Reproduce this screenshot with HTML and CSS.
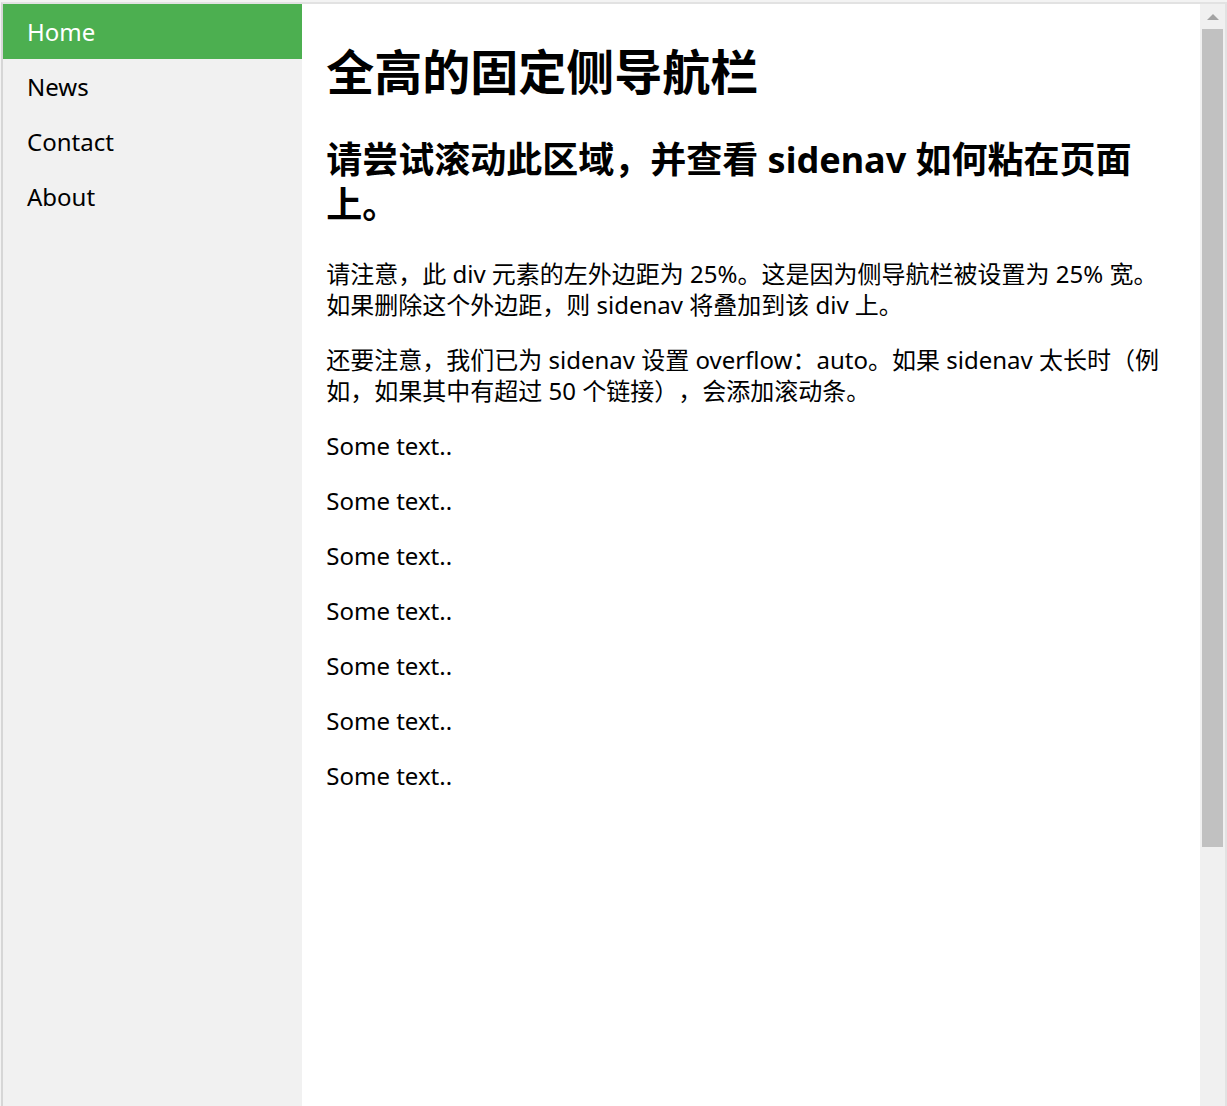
FILE: index.html
```html
<!DOCTYPE html>
<html lang="zh">
<head>
<meta charset="utf-8">
<title>全高的固定侧导航栏</title>
<link rel="stylesheet" href="styles.css">
</head>
<body>
<div class="frame">
  <div class="viewport">
    <ul class="sidenav">
      <li><a class="active" href="#home">Home</a></li>
      <li><a href="#news">News</a></li>
      <li><a href="#contact">Contact</a></li>
      <li><a href="#about">About</a></li>
    </ul>
    <div class="content">
      <h1>全高的固定侧导航栏</h1>
      <h2>请尝试滚动此区域，并查看 sidenav 如何粘在页面上。</h2>
      <p>请注意，此 div 元素的左外边距为 25%。这是因为侧导航栏被设置为 25% 宽。如果删除这个外边距，则 sidenav 将叠加到该 div 上。</p>
      <p>还要注意，我们已为 sidenav 设置 overflow：auto。如果 sidenav 太长时（例如，如果其中有超过 50 个链接），会添加滚动条。</p>
      <p>Some text..</p>
      <p>Some text..</p>
      <p>Some text..</p>
      <p>Some text..</p>
      <p>Some text..</p>
      <p>Some text..</p>
      <p>Some text..</p>
    </div>
  </div>
  <div class="scrollbar">
    <div class="scroll-arrow"><span class="tri"></span></div>
    <div class="scroll-thumb"></div>
  </div>
</div>
</body>
</html>
```

FILE: styles.css
```css
html, body {
  margin: 0;
  height: 100%;
  overflow: hidden;
}
body {
  background: #f3f3f3;
  padding: 2px 0 0 1px;
  box-sizing: border-box;
  font-family: "Noto Sans", "Noto Sans CJK SC", sans-serif;
  color: #000;
  text-spacing-trim: space-all;
}
.frame {
  display: flex;
  height: 1200px;
  border-top: 2px solid #e2e2e2;
  border-left: 2px solid #d6d6d6;
  border-right: 2px solid #e2e2e2;
  background: #fff;
}
.viewport {
  flex: 1;
  display: flex;
  align-items: stretch;
  min-width: 0;
}
.sidenav {
  list-style: none;
  margin: 0;
  padding: 0;
  width: 25%;
  flex: none;
  background: #f1f1f1;
}
.sidenav a {
  display: block;
  padding: 12px 24px;
  font-size: 24px;
  line-height: 31px;
  color: #000;
  text-decoration: none;
}
.sidenav a.active {
  background: #4caf50;
  color: #fff;
}
.content {
  flex: 1;
  padding: 3px 24px 1px;
  min-width: 0;
}
.content h1 {
  font-size: 48px;
  line-height: 66px;
  margin: 32px 0;
  font-weight: bold;
}
.content h2 {
  font-size: 36px;
  line-height: 45px;
  margin: 30px 0 31px;
  font-weight: bold;
}
.content p {
  font-size: 24px;
  line-height: 31px;
  margin: 24px 0;
}
.scrollbar {
  width: 25px;
  flex: none;
  background: #f0f0f0;
  display: flex;
  flex-direction: column;
  align-items: center;
}
.scroll-arrow {
  height: 25px;
  width: 100%;
  display: flex;
  align-items: center;
  justify-content: center;
}
.tri {
  width: 0;
  height: 0;
  border-left: 6px solid transparent;
  border-right: 6px solid transparent;
  border-bottom: 6px solid #a3a3a3;
}
.scroll-thumb {
  width: 21px;
  height: 818px;
  background: #c1c1c1;
}
```
